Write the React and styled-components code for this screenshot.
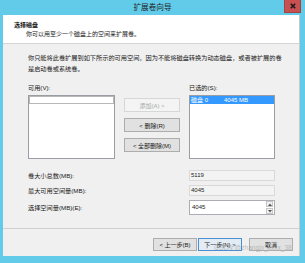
import React from "react";
import styled, { createGlobalStyle } from "styled-components";

const GlobalStyle = createGlobalStyle`
  html, body { margin: 0; padding: 0; background: #ffffff; }
  body { font-family: "Liberation Sans", "Noto Sans CJK SC", sans-serif; }
  * { box-sizing: border-box; }
`;

const Window = styled.div`
  position: relative;
  width: 305px;
  height: 263px;
  background: #62cbe9;
  display: flex;
  flex-direction: column;
  overflow: hidden;
`;

const TitleBar = styled.div`
  height: 15px;
  flex: none;
  display: grid;
  grid-template-columns: 1fr auto 1fr;
  align-items: start;
`;

const Title = styled.div`
  grid-column: 2;
  font-size: 7.6px;
  line-height: 15px;
  color: #1e1e1e;
  white-space: nowrap;
`;

const CloseButton = styled.div`
  grid-column: 3;
  justify-self: end;
  margin-right: 4px;
  width: 17px;
  height: 13px;
  background: #c75050;
  border: 1px solid #a34444;
  border-top: none;
  display: flex;
  align-items: center;
  justify-content: center;
`;

const Client = styled.div`
  flex: 1;
  margin: 0 5px 7px 3px;
  background: #f0f0f0;
  display: flex;
  flex-direction: column;
  border-right: 1px solid #c9c9c9;
`;

const Header = styled.div`
  height: 29px;
  flex: none;
  background: #ffffff;
  border-bottom: 1px solid #d5d5d5;
  padding: 6px 0 0 11px;
`;

const HeaderTitle = styled.div`
  font-size: 6px;
  line-height: 9px;
  font-weight: bold;
  color: #111;
`;

const HeaderSub = styled.div`
  font-size: 6px;
  line-height: 9px;
  padding-left: 12px;
  color: #222;
  white-space: nowrap;
`;

const Content = styled.div`
  padding: 8px 0 0 25px;
`;

const TextLine = styled.div`
  font-size: 6.2px;
  line-height: 11px;
  color: #1a1a1a;
  white-space: nowrap;
`;

const ListsArea = styled.div`
  margin-top: 8px;
  display: grid;
  grid-template-columns: 87px 56px 86px;
  column-gap: 9px;
`;

const Column = styled.div`
  display: flex;
  flex-direction: column;
`;

const ListBox = styled.div`
  margin-top: 2px;
  height: 64px;
  background: #ffffff;
  border: 1px solid #9a9da3;
  padding: 0 0;
`;

const ListItem = styled.div`
  height: 8px;
  display: grid;
  grid-template-columns: 33px auto;
  align-items: center;
  padding-left: 1px;
  font-size: 6px;
  line-height: 8px;
  white-space: nowrap;
  color: ${(p) => (p.$selected ? "#ffffff" : "#1a1a1a")};
  background: ${(p) => (p.$selected ? "#3399ff" : "transparent")};
  border: ${(p) => (p.$focus ? "1px solid #b8b8b8" : "none")};
`;

const ButtonStack = styled.div`
  padding-top: 16px;
  display: flex;
  flex-direction: column;
  gap: 6px;
`;

const DialogButton = styled.div`
  height: ${(p) => p.$h || 14}px;
  width: ${(p) => (p.$w ? `${p.$w}px` : "auto")};
  display: flex;
  align-items: center;
  justify-content: center;
  font-size: 6px;
  white-space: nowrap;
  color: ${(p) => (p.$variant === "disabled" ? "#a6a6a6" : "#1a1a1a")};
  background: ${(p) =>
    p.$variant === "disabled" ? "#f4f4f4" : p.$variant === "default" ? "#e3ebf4" : "#e1e1e1"};
  border: 1px solid
    ${(p) =>
      p.$variant === "disabled" ? "#d6d6d6" : p.$variant === "default" ? "#4a8fd0" : "#adadad"};
  margin-left: ${(p) => p.$ml || 0}px;
`;

const Rows = styled.div`
  margin-top: 11px;
  display: grid;
  grid-template-columns: 161px 86px;
  grid-template-rows: 11px 11px 15px;
  row-gap: 4px;
  align-items: center;
`;

const RowLabel = styled.div`
  font-size: 6.2px;
  line-height: 9px;
  color: #1a1a1a;
  white-space: nowrap;
`;

const ReadOnlyBox = styled.div`
  height: 11px;
  background: #f3f3f3;
  border: 1px solid #d9d9d9;
  font-size: 6px;
  line-height: 9px;
  padding-left: 1px;
  color: #222;
`;

const SpinBox = styled.div`
  height: 15px;
  background: #ffffff;
  border: 1px solid #abadb3;
  display: flex;
  align-items: stretch;
`;

const SpinValue = styled.div`
  flex: 1;
  font-size: 6px;
  line-height: 13px;
  padding-left: 2px;
  color: #222;
`;

const SpinArrows = styled.div`
  width: 7px;
  margin: 0 1px 0 0;
  display: flex;
  flex-direction: column;
  justify-content: center;
  gap: 1px;
`;

const SpinHalf = styled.div`
  height: 6px;
  background: #f0f0f0;
  border: 1px solid #c6c6c6;
  display: flex;
  align-items: center;
  justify-content: center;
`;

const Separator = styled.div`
  margin-top: 13px;
  height: 1px;
  background: #cfcfcf;
`;

const Footer = styled.div`
  display: flex;
  justify-content: flex-end;
  padding: 9px 6px 0 0;
`;

const Watermark = styled.div`
  position: absolute;
  left: 214px;
  top: 244px;
  font-size: 6.6px;
  line-height: 8px;
  color: rgba(140, 140, 140, 0.55);
  white-space: nowrap;
  pointer-events: none;
`;

const Tri = ({ up }) => (
  <svg width="4" height="3" viewBox="0 0 4 3">
    <path d={up ? "M0 3 L2 0.5 L4 3 Z" : "M0 0 L2 2.5 L4 0 Z"} fill="#555" />
  </svg>
);

export default function App() {
  return (
    <>
      <GlobalStyle />
      <Window>
        <TitleBar>
          <Title>扩展卷向导</Title>
          <CloseButton>
            <svg width="6" height="6" viewBox="0 0 6 6">
              <path d="M0.8 0.8 L5.2 5.2 M5.2 0.8 L0.8 5.2" stroke="#1a1a1a" strokeWidth="1.6" />
            </svg>
          </CloseButton>
        </TitleBar>
        <Client>
          <Header>
            <HeaderTitle>选择磁盘</HeaderTitle>
            <HeaderSub>你可以用至少一个磁盘上的空间来扩展卷。</HeaderSub>
          </Header>
          <Content>
            <TextLine>你只能将此卷扩展到如下所示的可用空间，因为不能将磁盘转换为动态磁盘，或者被扩展的卷</TextLine>
            <TextLine>是启动卷或系统卷。</TextLine>
            <ListsArea>
              <Column>
                <TextLine>可用(V):</TextLine>
                <ListBox>
                  <ListItem $focus />
                </ListBox>
              </Column>
              <ButtonStack>
                <DialogButton $variant="disabled">添加(A) &gt;</DialogButton>
                <DialogButton>&lt; 删除(R)</DialogButton>
                <DialogButton>&lt; 全部删除(M)</DialogButton>
              </ButtonStack>
              <Column>
                <TextLine>已选的(S):</TextLine>
                <ListBox>
                  <ListItem $selected>
                    <span>磁盘 0</span>
                    <span>4045 MB</span>
                  </ListItem>
                </ListBox>
              </Column>
            </ListsArea>
            <Rows>
              <RowLabel>卷大小总数(MB):</RowLabel>
              <ReadOnlyBox>5119</ReadOnlyBox>
              <RowLabel>最大可用空间量(MB):</RowLabel>
              <ReadOnlyBox>4045</ReadOnlyBox>
              <RowLabel>选择空间量(MB)(E):</RowLabel>
              <SpinBox>
                <SpinValue>4045</SpinValue>
                <SpinArrows>
                  <SpinHalf>
                    <Tri up />
                  </SpinHalf>
                  <SpinHalf>
                    <Tri />
                  </SpinHalf>
                </SpinArrows>
              </SpinBox>
            </Rows>
          </Content>
          <Separator />
          <Footer>
            <DialogButton $w={44} $h={13}>&lt; 上一步(B)</DialogButton>
            <DialogButton $w={44} $h={13} $ml={1} $variant="default">下一步(N) &gt;</DialogButton>
            <DialogButton $w={44} $h={13} $ml={7}>取消</DialogButton>
          </Footer>
        </Client>
        <Watermark>CSDN @zhangjx_xxxx_38</Watermark>
      </Window>
    </>
  );
}
